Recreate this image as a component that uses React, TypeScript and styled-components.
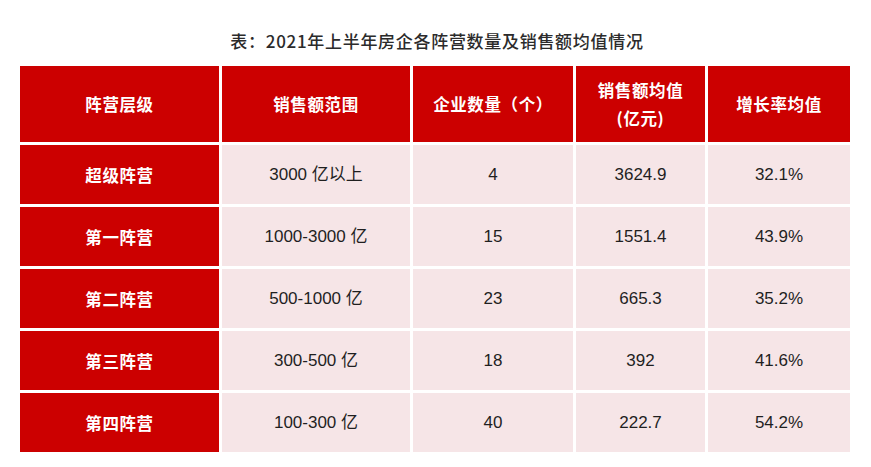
import React from 'react'
import styled, { createGlobalStyle } from 'styled-components'

const GlobalStyle = createGlobalStyle`
  html, body {
    margin: 0;
    padding: 0;
    background: #ffffff;
  }
`

const Page = styled.div`
  width: 871px;
  height: 467px;
  padding: 30px 21px 0 20px;
  box-sizing: border-box;
  background: #ffffff;
`

const Title = styled.h1`
  margin: 0 0 15px 0;
  height: 21px;
  line-height: 21px;
  text-align: center;
  font-family: 'Noto Sans CJK SC', sans-serif;
  font-size: 17px;
  font-weight: 500;
  color: #2b2b2b;
  letter-spacing: 0.7px;
  padding-left: 4px;
`

const Table = styled.div`
  display: grid;
  grid-template-columns: 199px 188px 160px 129px 142px;
  grid-template-rows: 76px repeat(5, 59px);
  gap: 3px;
`

const Cell = styled.div<{ $variant: 'head' | 'label' | 'data' }>`
  display: flex;
  flex-direction: column;
  align-items: center;
  justify-content: center;
  text-align: center;
  background: ${(p) => (p.$variant === 'data' ? '#f6e5e7' : '#cc0000')};
  color: ${(p) => (p.$variant === 'data' ? '#1f1f1f' : '#ffffff')};
  font-family: ${(p) =>
    p.$variant === 'data'
      ? "'Liberation Sans', 'Noto Sans CJK SC', sans-serif"
      : "'Noto Sans CJK SC', sans-serif"};
  font-size: ${(p) => (p.$variant === 'data' ? '17px' : '16.5px')};
  font-weight: ${(p) => (p.$variant === 'data' ? 400 : 700)};
  letter-spacing: ${(p) => (p.$variant === 'data' ? '0' : '0.6px')};
  line-height: 28px;
`

const headers = ['阵营层级', '销售额范围', '企业数量（个）', ['销售额均值', '(亿元)'], '增长率均值']

const rows = [
  ['超级阵营', '3000 亿以上', '4', '3624.9', '32.1%'],
  ['第一阵营', '1000-3000 亿', '15', '1551.4', '43.9%'],
  ['第二阵营', '500-1000 亿', '23', '665.3', '35.2%'],
  ['第三阵营', '300-500 亿', '18', '392', '41.6%'],
  ['第四阵营', '100-300 亿', '40', '222.7', '54.2%'],
]

export default function App() {
  return (
    <>
      <GlobalStyle />
      <Page>
        <Title>表：2021年上半年房企各阵营数量及销售额均值情况</Title>
        <Table>
          {headers.map((h, i) => (
            <Cell key={`h${i}`} $variant="head">
              {Array.isArray(h) ? h.map((line) => <span key={line}>{line}</span>) : h}
            </Cell>
          ))}
          {rows.map((row) =>
            row.map((value, i) => (
              <Cell key={`${row[0]}-${i}`} $variant={i === 0 ? 'label' : 'data'}>
                {value}
              </Cell>
            ))
          )}
        </Table>
      </Page>
    </>
  )
}
